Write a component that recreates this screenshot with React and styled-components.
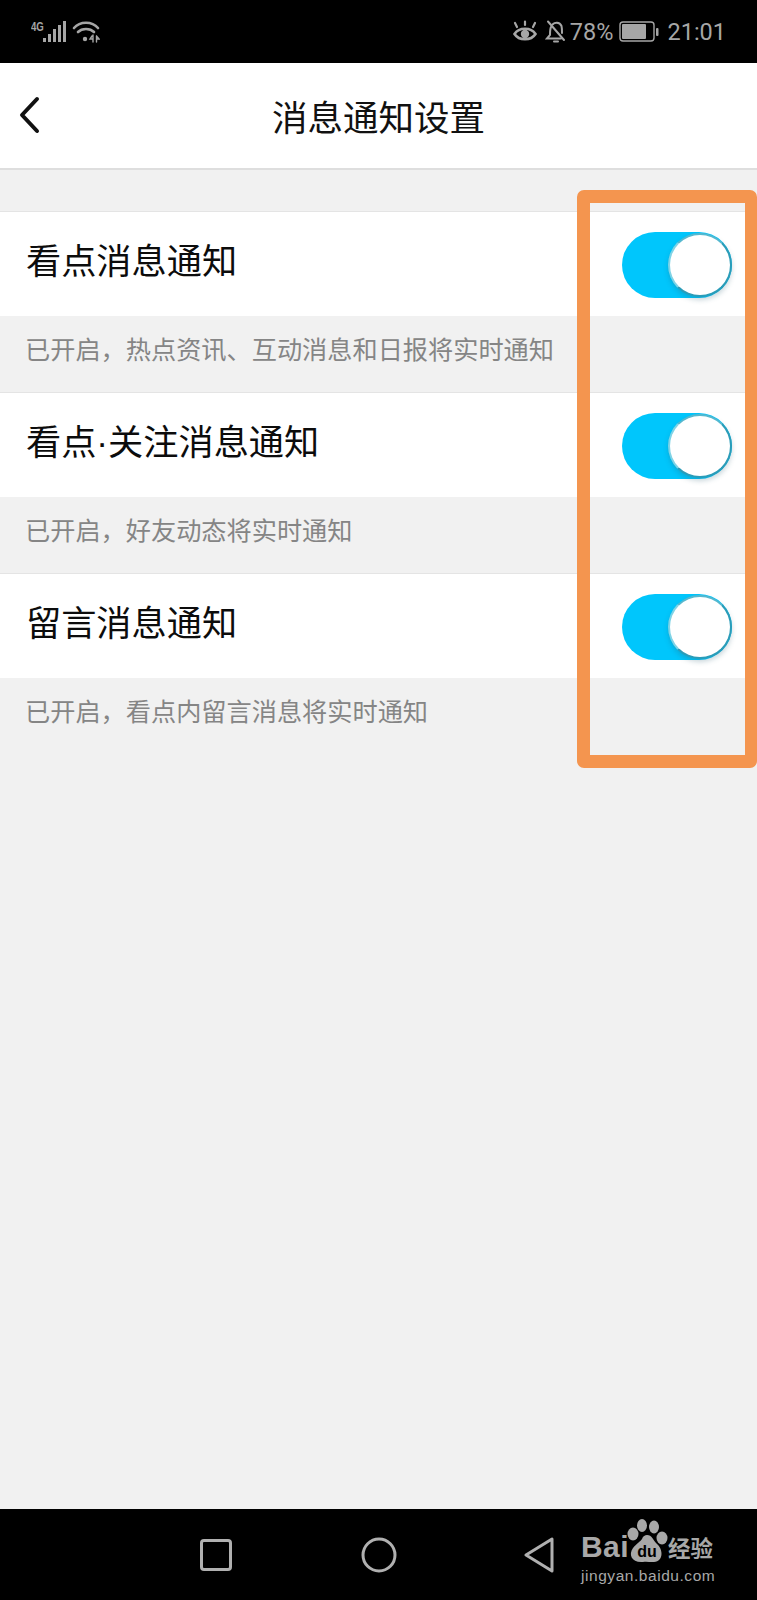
import React from 'react'
import styled, { createGlobalStyle } from 'styled-components';

const Global = createGlobalStyle`
  html, body { margin: 0; padding: 0; background: #f1f1f1; }
  * { box-sizing: border-box; }
`;

const Page = styled.div`
  position: relative;
  width: 757px;
  height: 1600px;
  display: flex;
  flex-direction: column;
  background: #f1f1f1;
  font-family: "Noto Sans CJK SC", "Liberation Sans", sans-serif;
  overflow: hidden;
`;

const StatusBar = styled.div`
  height: 63px;
  background: #000;
  display: flex;
  justify-content: space-between;
  align-items: center;
  padding: 0 31px 0 31px;
  color: #a6a6a6;
`;

const StatusGroup = styled.div`
  display: flex;
  align-items: center;
`;

const NetLabel = styled.span`
  font-family: "Liberation Sans", sans-serif;
  font-size: 12px;
  font-weight: 700;
  line-height: 12px;
  width: 12px;
  margin-top: -10px;
  transform: scaleX(0.8);
  transform-origin: left;
`;

const StatusText = styled.span`
  font-family: Roboto, sans-serif;
  font-size: ${p => p.$size}px;
  line-height: 30px;
  margin-left: ${p => p.$left}px;
`;

const Header = styled.div`
  height: 107px;
  background: #fff;
  border-bottom: 2px solid #dedede;
  display: flex;
  align-items: center;
  justify-content: center;
  position: relative;
`;

const BackIcon = styled.svg`
  position: absolute;
  left: 18px;
  top: 33px;
`;

const Title = styled.h1`
  margin: 2px 0 0;
  font-size: 35.5px;
  font-weight: 400;
  color: #111;
  line-height: 1.2;
`;

const List = styled.div`
  padding-top: 41px;
  flex: 1;
`;

const Row = styled.div`
  height: 105px;
  background: #fff;
  border-top: 1px solid #e4e4e4;
  display: flex;
  align-items: center;
  justify-content: space-between;
  padding: 0 25px 0 26px;
`;

const RowTitle = styled.div`
  font-family: "Liberation Sans", "Noto Sans CJK SC", sans-serif;
  font-size: 35.2px;
  color: #0c0c0c;
  line-height: 1.2;
  margin-top: -3px;
`;

const Note = styled.div`
  height: 76px;
  font-size: 25.2px;
  line-height: 65px;
  color: #858585;
  padding-left: 25px;
  white-space: nowrap;
`;

const Toggle = styled.div`
  position: relative;
  width: 110px;
  height: 66px;
  border-radius: 33px;
  background: #00c6fc;
  margin-top: 2px;
  flex: none;
`;

const Knob = styled.div`
  position: absolute;
  right: 0;
  top: 1px;
  width: 64px;
  height: 64px;
  border-radius: 50%;
  background: #fff;
  border: 2px solid #2b9cb8;
  border-left-color: #7fd3e6;
  border-top-color: #55b8cf;
  box-shadow: 0 3px 5px rgba(40, 90, 110, 0.25);
`;

const Frame = styled.div`
  position: absolute;
  left: 577px;
  top: 190px;
  width: 180px;
  height: 578px;
  border: 13px solid #f4954f;
  border-right-width: 12px;
  border-radius: 7px;
`;

const NavBar = styled.div`
  height: 91px;
  background: #000;
  display: flex;
  align-items: center;
  position: relative;
  padding-left: 200px;
  gap: 129px;
`;

const Watermark = styled.div`
  position: absolute;
  left: 581px;
  top: 9px;
  width: 140px;
  color: #a8a8a8;
`;

const BrandRow = styled.div`
  display: flex;
  align-items: flex-end;
  height: 45px;
`;

const BrandText = styled.span`
  font-family: "Liberation Sans", sans-serif;
  font-weight: 700;
  font-size: 30px;
  line-height: 32px;
  letter-spacing: 0.4px;
`;

const Paw = styled.svg`
  margin: 0 0 0 -3px;
  flex: none;
`;

const BrandCn = styled.span`
  font-size: 22.5px;
  line-height: 32px;
  font-weight: 700;
  white-space: nowrap;
`;

const Domain = styled.div`
  font-family: "Liberation Sans", sans-serif;
  font-size: 15.5px;
  line-height: 18px;
  letter-spacing: 0.55px;
  margin-top: 4px;
  white-space: nowrap;
`;

const items = [
  { name: '看点消息通知', note: '已开启，热点资讯、互动消息和日报将实时通知' },
  { name: '看点·关注消息通知', note: '已开启，好友动态将实时通知' },
  { name: '留言消息通知', note: '已开启，看点内留言消息将实时通知' },
];

const App = () => {
  return (
    <Page>
      <Global />
      <StatusBar>
        <StatusGroup>
          <NetLabel>4G</NetLabel>
          <svg width="23" height="22" viewBox="0 0 23 22" fill="#a6a6a6">
            <rect x="0" y="17" width="3" height="4" />
            <rect x="5" y="13" width="3" height="8" />
            <rect x="10" y="8" width="3" height="13" />
            <rect x="15" y="4" width="3" height="17" />
            <rect x="20" y="0" width="3" height="21" />
          </svg>
          <svg width="28" height="22" viewBox="0 0 28 22" fill="none" stroke="#a6a6a6" strokeWidth="2.6" strokeLinecap="round" style={{ marginLeft: 6 }}>
            <path d="M2 7 C8 0 20 0 26 7" />
            <path d="M6 11 C10 7 18 7 22 11" />
            <circle cx="13" cy="18" r="2.2" fill="#a6a6a6" stroke="none" />
            <path d="M20 15 L18 18 L21 18 M21 14 V21 M24.5 15 V21 M24.5 15 L27 18 L24.5 18" strokeWidth="1.4" />
          </svg>
        </StatusGroup>
        <StatusGroup>
          <svg width="24" height="23" viewBox="0 0 24 23" fill="none" stroke="#a6a6a6" strokeWidth="2.6" strokeLinecap="round">
            <path d="M1.5 14 C6 7 18 7 22.5 14 C18 21 6 21 1.5 14 Z" />
            <circle cx="12" cy="14" r="4.2" fill="#a6a6a6" stroke="none" />
            <path d="M4 7 L2 3 M12 5 V1.500 M20 7 L22 3" strokeWidth="2.2" />
          </svg>
          <svg width="22" height="24" viewBox="0 0 22 24" fill="none" stroke="#a6a6a6" strokeWidth="2" strokeLinecap="round" style={{ marginLeft: 8 }}>
            <path d="M3 1.5 L19 20" />
            <path d="M6 7 C5 9 5 11 5 15 L2 18.5 H16" />
            <path d="M7.5 4.5 C9.5 2.5 14.5 1.5 16.500 6 C17 8 17 11 17 13" />
            <path d="M9 21.5 H13" />
          </svg>
          <StatusText $size={23.5} $left={3}>78%</StatusText>
          <svg width="42" height="26" viewBox="0 0 42 26" fill="none" style={{ marginLeft: 6, marginTop: 1 }}>
            <rect x="1" y="3" width="34" height="19" rx="3" stroke="#a6a6a6" strokeWidth="1.4" />
            <rect x="3" y="5" width="24" height="15" rx="1" fill="#a6a6a6" />
            <rect x="37" y="9" width="2.5" height="8" rx="1" fill="#a6a6a6" />
          </svg>
          <StatusText $size={23.5} $left={6}>21:01</StatusText>
        </StatusGroup>
      </StatusBar>

      <Header>
        <BackIcon width="24" height="38" viewBox="0 0 24 38" fill="none" stroke="#111" strokeWidth="4" strokeLinecap="round" strokeLinejoin="round">
          <path d="M19 3 L4 19 L19 35" />
        </BackIcon>
        <Title>消息通知设置</Title>
      </Header>

      <List>
        {items.map(item => (
          <div key={item.name}>
            <Row>
              <RowTitle>{item.name}</RowTitle>
              <Toggle><Knob /></Toggle>
            </Row>
            <Note>{item.note}</Note>
          </div>
        ))}
      </List>

      <NavBar>
        <svg width="32" height="32" viewBox="0 0 32 32" fill="none" stroke="#b0b0b0" strokeWidth="3">
          <rect x="1.5" y="1.5" width="29" height="29" rx="2.5" />
        </svg>
        <svg width="36" height="36" viewBox="0 0 36 36" fill="none" stroke="#b0b0b0" strokeWidth="3">
          <circle cx="18" cy="18" r="16" />
        </svg>
        <svg width="32" height="36" viewBox="0 0 32 36" fill="none" stroke="#b0b0b0" strokeWidth="3" strokeLinejoin="round" style={{ marginLeft: -2 }}>
          <path d="M2 18 L28 2 V34 Z" />
        </svg>
        <Watermark>
          <BrandRow>
            <BrandText>Bai</BrandText>
            <Paw width="42" height="44" viewBox="0 0 42 44" fill="#a8a8a8">
              <ellipse cx="7" cy="15" rx="5.5" ry="6.5" />
              <ellipse cx="16" cy="6.500" rx="5" ry="6.5" />
              <ellipse cx="28" cy="8" rx="5" ry="6.5" />
              <ellipse cx="36" cy="19" rx="5.5" ry="6.5" />
              <path d="M21 16 C26 16 27 21 31 25 C37 30 38 42 28 43 C24 43.500 21 42 17 43 C6 44 2 36 7 29 C11 24 14 23 16 20 C17 17 19 16 21 16 Z" />
              <text x="21" y="38" fontSize="16" fontWeight="700" fontFamily="Liberation Sans, sans-serif" fill="#000" textAnchor="middle">du</text>
            </Paw>
            <BrandCn>经验</BrandCn>
          </BrandRow>
          <Domain>jingyan.baidu.com</Domain>
        </Watermark>
      </NavBar>

      <Frame />
    </Page>
  )
}

export default App
